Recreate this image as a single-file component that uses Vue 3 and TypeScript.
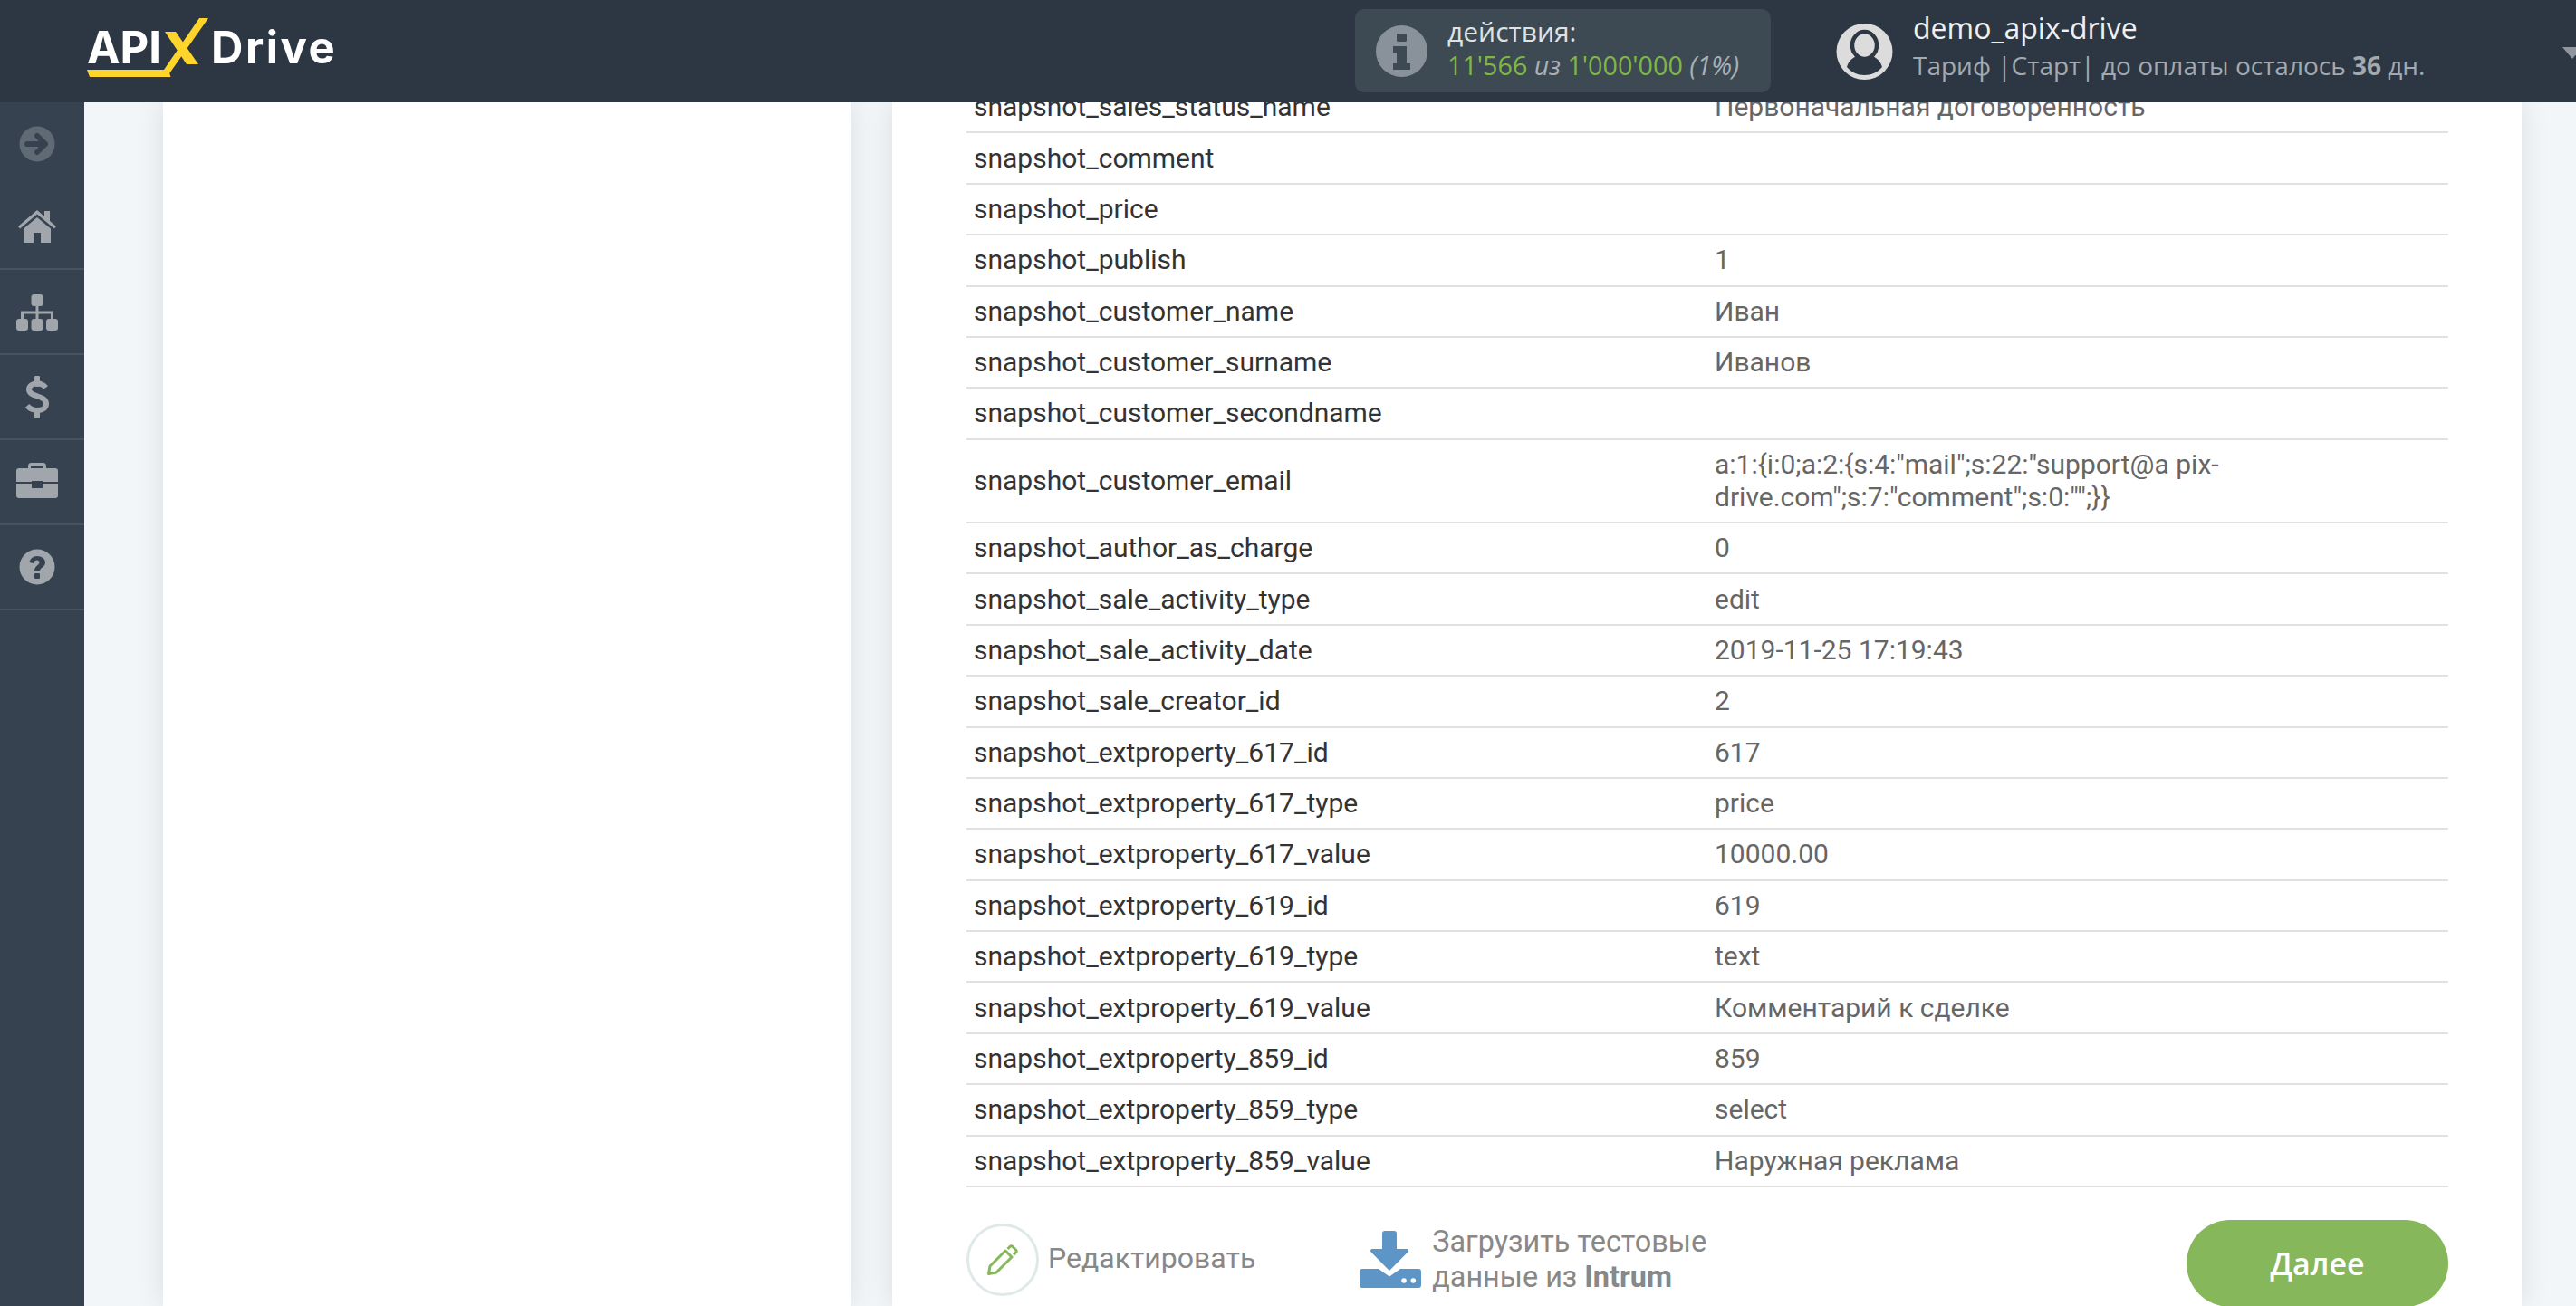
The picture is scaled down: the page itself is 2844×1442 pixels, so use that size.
<script setup lang="ts">
interface Row { name: string; value: string }
const rows: Row[] = [
  { name: 'snapshot_sales_status_name', value: 'Первоначальная договоренность' },
  { name: 'snapshot_comment', value: '' },
  { name: 'snapshot_price', value: '' },
  { name: 'snapshot_publish', value: '1' },
  { name: 'snapshot_customer_name', value: 'Иван' },
  { name: 'snapshot_customer_surname', value: 'Иванов' },
  { name: 'snapshot_customer_secondname', value: '' },
  { name: 'snapshot_customer_email', value: 'a:1:{i:0;a:2:{s:4:"mail";s:22:"support@a pix-drive.com";s:7:"comment";s:0:"";}}' },
  { name: 'snapshot_author_as_charge', value: '0' },
  { name: 'snapshot_sale_activity_type', value: 'edit' },
  { name: 'snapshot_sale_activity_date', value: '2019-11-25 17:19:43' },
  { name: 'snapshot_sale_creator_id', value: '2' },
  { name: 'snapshot_extproperty_617_id', value: '617' },
  { name: 'snapshot_extproperty_617_type', value: 'price' },
  { name: 'snapshot_extproperty_617_value', value: '10000.00' },
  { name: 'snapshot_extproperty_619_id', value: '619' },
  { name: 'snapshot_extproperty_619_type', value: 'text' },
  { name: 'snapshot_extproperty_619_value', value: 'Комментарий к сделке' },
  { name: 'snapshot_extproperty_859_id', value: '859' },
  { name: 'snapshot_extproperty_859_type', value: 'select' },
  { name: 'snapshot_extproperty_859_value', value: 'Наружная реклама' },
]
</script>

<template>
  <div class="app">
    <header class="topbar">
      <div class="logo">
        <span class="logo-word logo-api">API</span>
        <svg class="logo-x" width="50" height="64" viewBox="0 0 50 64">
          <polygon points="49,0 39,0 0,57 4,64" fill="#ffd52b" />
          <polygon points="1,15 13,15 38,51 25,51" fill="#ffd52b" />
        </svg>
        <span class="logo-word logo-drive">Drive</span>
        <svg class="logo-line" width="94" height="8" viewBox="0 0 94 8">
          <polygon points="0,0 90,0 92.500,8 3,8" fill="#ffd52b" />
        </svg>
      </div>

      <div class="usage">
        <svg class="usage-icon" width="57" height="57" viewBox="0 0 57 57">
          <circle cx="28.500" cy="28.500" r="28.500" fill="#89929a" />
          <rect x="23" y="9" width="11" height="9" rx="1.500" fill="#3d4a54" />
          <path d="M19 23h15v19h4v7H19v-7h4V30h-4z" fill="#3d4a54" />
        </svg>
        <div class="usage-text">
          <div class="usage-title">действия:</div>
          <div class="usage-count">
            <span class="green">11'566</span> <i>из</i> <span class="green">1'000'000</span> <i>(1%)</i>
          </div>
        </div>
      </div>

      <div class="user">
        <svg class="user-icon" width="63" height="62" viewBox="0 0 63 62">
          <circle cx="31.500" cy="31" r="31" fill="#dcdcdc" />
          <ellipse cx="31.500" cy="24" rx="13.500" ry="15" fill="none" stroke="#2d3744" stroke-width="4.500" />
          <path d="M12 48c2-7 7-11 11.500-12 3 2.500 13 2.500 16 0 4.500 1 9.500 5 11.500 12-5 6-12 9-19.500 9S17 54 12 48z" fill="#2d3744" />
        </svg>
        <div class="user-text">
          <div class="user-name">demo_apix-drive</div>
          <div class="user-plan">Тариф |Старт| до оплаты осталось <b>36</b> дн.</div>
        </div>
      </div>
      <span class="caret"></span>
    </header>

    <div class="body">
      <nav class="sidebar">
        <div class="side-item side-first">
          <svg class="dim" width="40" height="40" viewBox="0 0 40 40">
            <circle cx="20" cy="20" r="19.500" fill="#a0a6ac" />
            <path d="M9 20h20M20 11l9 9-9 9" fill="none" stroke="#36424f" stroke-width="6" stroke-linecap="round" stroke-linejoin="round" />
          </svg>
        </div>
        <div class="side-item">
          <svg width="42" height="36" viewBox="0 0 42 36">
            <path d="M21 0 0 18l2 2.500L21 4.500l19 16 2-2.500-7-6V1h-6v6z" fill="#a0a6ac" />
            <path d="M21 8 6 20.500V36h11V25h8v11h11V20.500z" fill="#a0a6ac" />
          </svg>
        </div>
        <div class="side-item">
          <svg class="nudge-down" width="46" height="40" viewBox="0 0 46 40">
            <rect x="16.500" y="0" width="13" height="13" rx="3" fill="#a0a6ac" />
            <rect x="0" y="27" width="13" height="13" rx="3" fill="#a0a6ac" />
            <rect x="16.500" y="27" width="13" height="13" rx="3" fill="#a0a6ac" />
            <rect x="33" y="27" width="13" height="13" rx="3" fill="#a0a6ac" />
            <path d="M23 13v14M6.500 27v-7h33v7" fill="none" stroke="#a0a6ac" stroke-width="3" />
          </svg>
        </div>
        <div class="side-item">
          <svg width="26" height="47" viewBox="0 0 26 47">
            <path d="M22.500 13C20 9.500 16.500 8.500 13 8.500c-5 0-9 2.500-9 6.500 0 9 19 5.500 19 16 0 4.500-4.500 7-10 7-4 0-8-1.500-11-5" fill="none" stroke="#a0a6ac" stroke-width="6" />
            <path d="M13 2v7M13 38v7" stroke="#a0a6ac" stroke-width="6" stroke-linecap="round" />
          </svg>
        </div>
        <div class="side-item">
          <svg class="nudge-up" width="46" height="39" viewBox="0 0 46 39">
            <path d="M14.500 7V3.500A2 2 0 0 1 16.500 1.500h13A2 2 0 0 1 31.500 3.500V7" fill="none" stroke="#a0a6ac" stroke-width="3" />
            <path d="M3 6h40a3 3 0 0 1 3 3v12H29v-1H17v1H0V9a3 3 0 0 1 3-3z" fill="#a0a6ac" />
            <path d="M0 23h17v5h12v-5h17v13a3 3 0 0 1-3 3H3a3 3 0 0 1-3-3z" fill="#a0a6ac" />
          </svg>
        </div>
        <div class="side-item">
          <svg width="40" height="40" viewBox="0 0 40 40">
            <circle cx="20" cy="20" r="19.500" fill="#a0a6ac" />
            <path d="M11.500 15c.5-4 4-7 8.500-7 5 0 9 3 9 7 0 5.500-6 5.500-6 9.500h-6c0-6 5.500-6.500 5.500-9.500 0-1.500-1.200-2.500-2.800-2.500-1.700 0-3 1-3.700 3.500z" fill="#36424f" />
            <rect x="17" y="27" width="6" height="6" rx="1" fill="#36424f" />
          </svg>
        </div>
      </nav>

      <div class="content">
        <section class="panel panel-left"></section>
        <section class="panel panel-right">
          <div class="table">
            <div v-for="row in rows" :key="row.name" class="row">
              <div class="cell cell-name">{{ row.name }}</div>
              <div class="cell cell-value">{{ row.value }}</div>
            </div>
          </div>
          <div class="actions">
            <div class="action-edit">
              <span class="edit-circle">
                <svg width="34" height="34" viewBox="0 0 34 34">
                  <path d="M1.500 32.500 3 24 20 7l7 7-17 17zM22.500 5l2.500-2.500q1.500-1.500 3 0l3.500 3.500q1.500 1.500 0 3L29 11.500" fill="none" stroke="#86b75a" stroke-width="3" stroke-linejoin="round" />
                </svg>
              </span>
              <span class="edit-label">Редактировать</span>
            </div>
            <div class="action-load">
              <svg width="68" height="63" viewBox="0 0 68 63">
                <path d="M28 0h10a3 3 0 0 1 3 3v17h11a2 2 0 0 1 1.500 3.300L33 44 12.500 23.300A2 2 0 0 1 14 20h11V3a3 3 0 0 1 3-3z" fill="#5e95c7" />
                <path d="M3 42h18l12 8.500L45 42h20a3 3 0 0 1 3 3v15a3 3 0 0 1-3 3H3a3 3 0 0 1-3-3V45a3 3 0 0 1 3-3z" fill="#5e95c7" />
                <circle cx="49" cy="55" r="2.800" fill="#fff" />
                <circle cx="59.300" cy="55" r="2.800" fill="#fff" />
              </svg>
              <span class="load-label">Загрузить тестовые<br />данные из <b>Intrum</b></span>
            </div>
            <button class="next" type="button">Далее</button>
          </div>
        </section>
      </div>
    </div>
  </div>
</template>

<style>
html, body { margin: 0; height: 100%; overflow: hidden; background: #f3f6f8; }
</style>

<style scoped>
.app { height: 100vh; display: flex; flex-direction: column; overflow: hidden; }
.topbar { flex: 0 0 113px; height: 113px; background: #2d3744; display: flex; align-items: center; overflow: hidden; position: relative; z-index: 1; }
.logo { width: 1400px; margin-left: 96px; display: flex; align-items: flex-start; position: relative; height: 113px; box-sizing: border-box; padding-top: 20px; flex: none; }
.logo-word { font-family: Inter, sans-serif; font-weight: 700; font-size: 49px; line-height: 66px; color: #fff; }
.logo-api { letter-spacing: 0; }
.logo-drive { letter-spacing: 2.5px; }
.logo-x { margin: 0 2px 0 3px; }
.logo-line { position: absolute; left: 0; top: 77px; }
.usage { width: 459px; height: 92px; box-sizing: border-box; flex: none; background: #3d4a54; border-radius: 10px; display: flex; align-items: center; padding-left: 23px; margin-top: -1px; }
.usage-text { margin-left: 22px; padding-bottom: 6px; font-family: "Open Sans", sans-serif; font-size: 28.7px; line-height: 36px; color: #dfe2e4; }
.usage-title { font-size: 30px; line-height: 38px; }
.usage-count { color: #aab0b5; }
.usage-count i { font-style: italic; }
.green { color: #7fb646; }
.user { display: flex; align-items: center; margin-left: 72px; flex: none; }
.user-text { margin-left: 22px; padding-bottom: 11px; font-family: "Open Sans", sans-serif; }
.user-name { font-size: 32px; line-height: 40px; color: #eef0f1; }
.user-plan { margin-top: 2px; font-size: 28px; line-height: 38px; color: #a2aab0; }
.user-plan b { font-weight: 700; }
.caret { margin-left: auto; margin-right: -7px; width: 0; height: 0; border-left: 11px solid transparent; border-right: 11px solid transparent; border-top: 13px solid #8f969d; margin-top: 4px; }
.body { flex: 1; display: flex; min-height: 0; overflow: hidden; }
.sidebar { flex: 0 0 93px; background: #36424f; display: flex; flex-direction: column; }
.side-item { height: 94px; flex: none; box-sizing: border-box; border-bottom: 2px solid #465361; padding-right: 12px; display: flex; align-items: center; justify-content: center; }
.side-first { height: 91px; border-bottom: 0; }
.dim { opacity: .4; }
.nudge-down { margin-top: 2px; }
.nudge-up { margin-top: -4px; }
.content { flex: 1; min-width: 0; display: flex; gap: 46px; padding: 0 60px 0 87px; }
.panel { background: #fff; box-shadow: 0 0 30px rgba(0, 0, 0, .1); }
.panel-left { flex: 0 0 759px; }
.panel-right { flex: 1; min-width: 0; padding: 0 81px 0 82px; }
.table { margin-top: -22px; font-family: Roboto, sans-serif; font-size: 30px; line-height: 36px; }
.row { display: grid; grid-template-columns: 1fr 1fr; align-items: center; border-bottom: 2px solid #e1e1e1; }
.cell { padding: 9.2px 8px; }
.cell-name { color: #333; }
.cell-value { color: #666; }
.actions { display: flex; align-items: flex-start; padding-top: 36px; position: relative; }
.action-edit { display: flex; align-items: center; margin-top: 4px; }
.edit-circle { width: 80px; height: 80px; box-sizing: border-box; border: 3px solid #dfe9e9; border-radius: 50%; display: flex; align-items: center; justify-content: center; }
.edit-label { margin-left: 10px; margin-top: -4px; font-family: Roboto, sans-serif; font-size: 32px; color: #888; }
.action-load { display: flex; align-items: center; margin-left: 115px; margin-top: 4px; height: 80px; }
.load-label { margin-left: 12px; font-family: Roboto, sans-serif; font-size: 32.4px; line-height: 39px; color: #888; }
.next { margin-left: auto; width: 289px; height: 96px; border: 0; border-radius: 48px; background: #86b75a; color: #fff; font-family: "Open Sans", sans-serif; font-weight: 600; font-size: 34px; padding: 0; }
</style>
